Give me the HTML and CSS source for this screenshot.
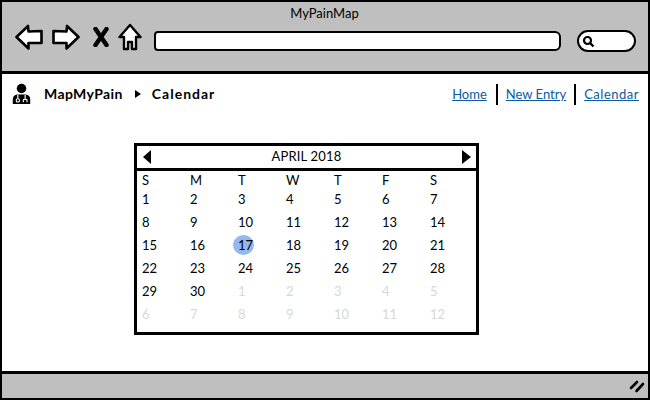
FILE: index.html
```html
<!DOCTYPE html>
<html lang="en">
<head>
<meta charset="utf-8">
<title>MyPainMap</title>
<link rel="stylesheet" href="styles.css">
</head>
<body>
<div class="window">
  <header class="chrome">
    <div class="chrome-title">MyPainMap</div>
    <div class="toolbar">
      <svg class="icon-back" width="28" height="26" viewBox="0 0 28 26"><path d="M1.500 13 L13 2 L13.500 7.500 L26.500 7 L26.500 19 L13.500 19 L13.500 24.500 Z" fill="#fff" stroke="#000" stroke-width="2.600" stroke-linejoin="round"/></svg>
      <svg class="icon-forward" width="28" height="26" viewBox="0 0 28 26"><path d="M26.500 13 L15 2 L14.500 7.500 L1.500 7 L1.500 19 L14.500 19 L14.500 24.500 Z" fill="#fff" stroke="#000" stroke-width="2.600" stroke-linejoin="round"/></svg>
      <svg class="icon-stop" width="16" height="20" viewBox="0 0 16 20"><path d="M2.500 2 L13.500 18 M13.500 2 L2.500 18" stroke="#000" stroke-width="4.400" stroke-linecap="round" fill="none"/></svg>
      <svg class="icon-home" width="24" height="28" viewBox="0 0 24 28"><path d="M12 2 L22.500 14 L18 14 L18 26 L14 26 L14 19 L10 19 L10 26 L6 26 L6 14 L1.500 14 Z" fill="#fff" stroke="#000" stroke-width="2.400" stroke-linejoin="round"/></svg>
      <div class="address"></div>
      <div class="search">
        <svg width="13" height="13" viewBox="0 0 13 13"><circle cx="5.500" cy="5.500" r="3.500" fill="#fff" stroke="#000" stroke-width="2.200"/><path d="M8 8 L11.500 11.500" stroke="#000" stroke-width="2.400"/></svg>
      </div>
    </div>
  </header>
  <main class="page">
    <div class="topbar">
      <nav class="crumbs">
        <svg class="icon-doctor" width="21" height="22" viewBox="0 0 21 24"><circle cx="10.500" cy="6" r="5.200" fill="#000"/><path d="M1 23 L1 18 Q1 13 6 12.500 L15 12.500 Q20 13 20 18 L20 23 Z" fill="#000"/><path d="M6.500 13 L6.500 17 M14.500 13 L14.500 17" stroke="#fff" stroke-width="1.300"/><circle cx="6.500" cy="19" r="1.800" fill="none" stroke="#fff" stroke-width="1.200"/><path d="M12.500 21 L12.500 18.500 Q14.500 16.500 16.500 18.500 L16.500 21" fill="none" stroke="#fff" stroke-width="1.200"/></svg>
        <span class="crumb">MapMyPain</span>
        <span class="crumb-sep"></span>
        <span class="crumb crumb-current">Calendar</span>
      </nav>
      <nav class="links">
        <a class="link" href="#">Home</a>
        <a class="link link-div" href="#">New Entry</a>
        <a class="link link-div link-wide" href="#">Calendar</a>
      </nav>
    </div>
    <section class="calendar">
      <div class="cal-head">
        <span class="arrow-left"></span>
        <span class="cal-title">APRIL 2018</span>
        <span class="arrow-right"></span>
      </div>
      <div class="cal-grid">
        <span class="dow">S</span><span class="dow">M</span><span class="dow">T</span><span class="dow">W</span><span class="dow">T</span><span class="dow">F</span><span class="dow">S</span>
        <span class="day">1</span><span class="day">2</span><span class="day">3</span><span class="day">4</span><span class="day">5</span><span class="day">6</span><span class="day">7</span>
        <span class="day">8</span><span class="day">9</span><span class="day">10</span><span class="day">11</span><span class="day">12</span><span class="day">13</span><span class="day">14</span>
        <span class="day">15</span><span class="day">16</span><span class="day today">17</span><span class="day">18</span><span class="day">19</span><span class="day">20</span><span class="day">21</span>
        <span class="day">22</span><span class="day">23</span><span class="day">24</span><span class="day">25</span><span class="day">26</span><span class="day">27</span><span class="day">28</span>
        <span class="day">29</span><span class="day">30</span><span class="day muted">1</span><span class="day muted">2</span><span class="day muted">3</span><span class="day muted">4</span><span class="day muted">5</span>
        <span class="day muted">6</span><span class="day muted">7</span><span class="day muted">8</span><span class="day muted">9</span><span class="day muted">10</span><span class="day muted">11</span><span class="day muted">12</span>
      </div>
    </section>
  </main>
  <footer class="statusbar">
    <svg width="16" height="14" viewBox="0 0 16 14"><path d="M2 9 L8 3 M7.500 12 L14 5" stroke="#000" stroke-width="2.600" stroke-linecap="round" fill="none"/></svg>
  </footer>
</div>
</body>
</html>
```
FILE: styles.css
```css
* { box-sizing: border-box; }
html, body { margin: 0; padding: 0; }
body { width: 650px; height: 400px; overflow: hidden; background: #fff; font-family: "Lato", "Open Sans", sans-serif; color: #000; }
.window { width: 650px; height: 400px; display: flex; flex-direction: column; border: 2px solid #000; }
.chrome { height: 72px; background: #bfbfbf; border-bottom: 3px solid #000; flex: none; display: flex; flex-direction: column; }
.chrome-title { height: 22px; padding-top: 3px; text-align: center; font-size: 13px; line-height: 17px; margin-right: 1px; }
.toolbar { display: flex; align-items: center; padding-left: 13px; height: 30px; margin-top: -2px; }
.icon-back { flex: none; }
.icon-forward { flex: none; margin-left: 9px; }
.icon-stop { flex: none; margin-left: 13px; }
.icon-home { flex: none; margin-left: 9px; }
.address { flex: none; width: 407px; height: 20px; margin-left: 12px; margin-top: 8px; background: #fff; border: 2.500px solid #000; border-radius: 4px 6px 6px 4px; }
.search { flex: none; width: 59px; height: 22px; margin-left: 16px; margin-top: 8px; background: #fff; border: 2.500px solid #000; border-radius: 11px; display: flex; align-items: center; padding-left: 3px; }
.page { flex: 1; min-height: 0; display: flex; flex-direction: column; background: #fff; }
.topbar { height: 39px; flex: none; display: flex; align-items: center; justify-content: space-between; padding: 0 9px 0 9px; }
.crumbs { display: flex; align-items: center; font-weight: 700; font-size: 14px; letter-spacing: 0.400px; }
.icon-doctor { margin-right: 12px; margin-top: 1px; }
.crumb-current { letter-spacing: 1px; }
.crumb-sep { width: 0; height: 0; margin: 0 11px 0 12px; border-left: 6px solid #000; border-top: 4.500px solid transparent; border-bottom: 4.500px solid transparent; }
.links { display: flex; align-items: center; font-size: 13px; margin-top: 2px; }
.link { color: #0b5aa3; text-decoration: underline; line-height: 21px; }
.link-div { margin-left: 9px; padding-left: 8px; border-left: 2px solid #000; }
.link-wide { margin-left: 8px; letter-spacing: 0.500px; }
.calendar { width: 345px; height: 192px; margin-left: 132px; margin-top: 30px; border: 3px solid #000; flex: none; }
.cal-head { height: 25px; border-bottom: 3px solid #000; display: flex; align-items: center; justify-content: space-between; padding: 0 5px 1px 6px; }
.cal-title { font-size: 13px; letter-spacing: 0.200px; margin-bottom: 2px; }
.arrow-left { width: 0; height: 0; border-right: 8px solid #000; border-top: 7px solid transparent; border-bottom: 7px solid transparent; }
.arrow-right { width: 0; height: 0; border-left: 9px solid #000; border-top: 7px solid transparent; border-bottom: 7px solid transparent; }
.cal-grid { display: grid; grid-template-columns: repeat(7, 48px); grid-template-rows: 15px repeat(6, 23px); padding: 1px 0 0 5px; font-size: 13px; }
.dow { display: flex; align-items: center; }
.day { display: flex; align-items: center; position: relative; z-index: 0; }
.today::before { content: ""; position: absolute; z-index: -1; left: -5px; top: 2px; width: 21px; height: 20px; border-radius: 50%; background: #94b7ef; }
.muted { color: #d8d8d8; }
.statusbar { height: 27px; flex: none; margin-top: auto; background: #bfbfbf; border-top: 3px solid #000; display: flex; align-items: center; justify-content: flex-end; padding-right: 3px; }
```
